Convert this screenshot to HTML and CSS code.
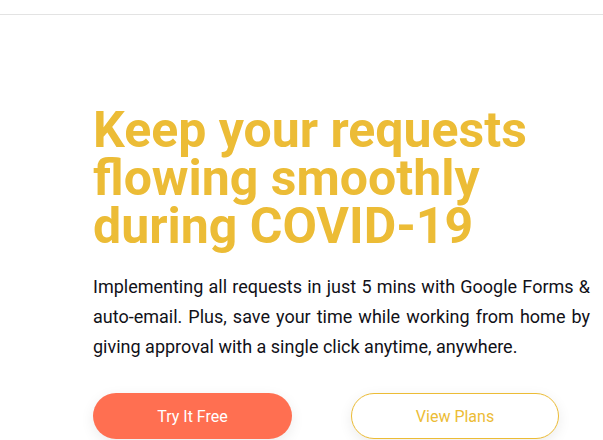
FILE: index.html
```html
<!DOCTYPE html>
<html>
<head>
<meta charset="utf-8">
<link rel="stylesheet" href="styles.css">
</head>
<body>
<header class="topbar"></header>
<main class="hero">
  <h1 class="title">Keep your requests flowing smoothly during COVID-19</h1>
  <p class="lead">Implementing all requests in just 5 mins with Google Forms &amp; auto-email. Plus, save your time while working from home by giving approval with a single click anytime, anywhere.</p>
  <div class="actions">
    <a class="btn btn-primary" href="#">Try It Free</a>
    <a class="btn btn-outline" href="#">View Plans</a>
  </div>
</main>
</body>
</html>
```
FILE: styles.css
```css
* { box-sizing: border-box; }
html, body { margin: 0; padding: 0; background: #fff; }
body { font-family: Roboto, "Liberation Sans", sans-serif; overflow: hidden; height: 440px; }
.topbar { height: 15px; border-bottom: 1px solid #e3e3e3; }
.hero { padding: 91px 13px 0 93px; }
.title {
  margin: 0;
  font-size: 50px;
  line-height: 48px;
  font-weight: 700;
  color: #ecbc36;
  width: 450px;
}
.lead {
  margin: 22px 0 0;
  font-size: 18px;
  line-height: 30px;
  color: #111118;
  text-align: justify;
  width: 497px;
}
.actions { display: flex; gap: 59px; margin-top: 31px; }
.btn {
  display: flex;
  align-items: center;
  justify-content: center;
  height: 46px;
  border-radius: 23px;
  font-size: 16px;
  text-decoration: none;
}
.btn-primary {
  width: 199px;
  background: #ff6f51;
  color: #fff;
  box-shadow: 0 4px 14px rgba(0,0,0,0.08);
}
.btn-outline {
  width: 208px;
  border: 1px solid #ecbc36;
  color: #ecbc36;
  background: #fff;
  box-shadow: 0 4px 14px rgba(0,0,0,0.08);
}
```
